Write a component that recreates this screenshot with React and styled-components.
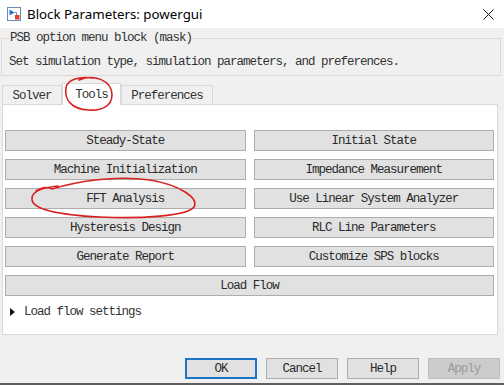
import React from "react";
import styled, { createGlobalStyle } from "styled-components";

const GlobalStyle = createGlobalStyle`
  html, body {
    margin: 0;
    padding: 0;
    background: #f0f0f0;
  }
  body {
    font-family: "Liberation Mono", "DejaVu Sans Mono", monospace;
  }
`;

const leftButtons = [
  "Steady-State",
  "Machine Initialization",
  "FFT Analysis",
  "Hysteresis Design",
  "Generate Report",
];

const rightButtons = [
  "Initial State",
  "Impedance Measurement",
  "Use Linear System Analyzer",
  "RLC Line Parameters",
  "Customize SPS blocks",
];

const tabs = [
  { label: "Solver", width: 60 },
  { label: "Tools", width: 59, active: true },
  { label: "Preferences", width: 92 },
];

const BlockIcon = () => (
  <svg width="14" height="14" viewBox="0 0 14 14">
    <rect x="0.5" y="0.5" width="13" height="13" fill="#fff" stroke="#6d8bb0" />
    <path d="M2.5 2.5 L7.5 5.5 L2.5 8.5 Z" fill="#2d6fc2" />
    <path d="M7.5 5.5 H9.5 V8" stroke="#6d8bb0" fill="none" />
    <rect x="8" y="8" width="4.5" height="4.5" fill="#e0402c" />
  </svg>
);

const CloseIcon = () => (
  <svg width="11" height="11" viewBox="0 0 11 11">
    <path d="M0.5 0.5 L10.5 10.5 M10.5 0.5 L0.5 10.5" stroke="#111" strokeWidth="1" />
  </svg>
);

const App = () => {
  return (
    <>
      <GlobalStyle />
      <Window>
        <TitleBar>
          <BlockIcon />
          <Title>Block Parameters: powergui</Title>
          <CloseIcon />
        </TitleBar>

        <GroupBox>
          <Legend>PSB option menu block (mask)</Legend>
          <Description>
            Set simulation type, simulation parameters, and preferences.
          </Description>
        </GroupBox>

        <TabRow>
          {tabs.map((t) => (
            <Tab key={t.label} $w={t.width} $active={t.active}>
              {t.label}
            </Tab>
          ))}
        </TabRow>

        <Panel>
          <ButtonGrid>
            {leftButtons.map((label, i) => (
              <React.Fragment key={label}>
                <ToolButton>{label}</ToolButton>
                <ToolButton>{rightButtons[i]}</ToolButton>
              </React.Fragment>
            ))}
            <ToolButton $wide>Load Flow</ToolButton>
          </ButtonGrid>
          <Expander>
            <Arrow />
            <span>Load flow settings</span>
          </Expander>
        </Panel>

        <Footer>
          <DialogButton $default>OK</DialogButton>
          <DialogButton>Cancel</DialogButton>
          <DialogButton>Help</DialogButton>
          <DialogButton $disabled>Apply</DialogButton>
        </Footer>

        {/* red hand-drawn annotation marks over the dialog */}
        <Marks width="504" height="385" viewBox="0 0 504 385">
          <path
            d="M79 80 C94 74 112 80 112 95 C112 107 100 111 88 110 C72 109 64 100 66 88 C67 80 78 76 93 78"
            fill="none"
            stroke="#d92020"
            strokeWidth="1.6"
            strokeLinecap="round"
          />
          <path
            d="M36 191 C42 187 48 187 52 189 C75 182 112 175 150 180 C180 185 199 198 194 207 C188 216 140 219 100 217 C60 215 34 210 32 200 C31 193 38 188 58 186"
            fill="none"
            stroke="#d92020"
            strokeWidth="1.6"
            strokeLinecap="round"
          />
        </Marks>
      </Window>
    </>
  );
};

export default App;

const Window = styled.div`
  position: relative;
  width: 504px;
  height: 385px;
  box-sizing: border-box;
  border-bottom: 2px solid #5e5e5e;
  background: #f0f0f0;
  display: flex;
  flex-direction: column;
  overflow: hidden;
  color: #1e1e1e;
  font-size: 12.5px;
  letter-spacing: -1px;
`;

const TitleBar = styled.div`
  height: 28px;
  flex-shrink: 0;
  background: #fff;
  display: flex;
  align-items: center;
  gap: 6px;
  padding: 0 10px 0 7px;
`;

const Title = styled.span`
  flex: 1;
  font-family: "Noto Sans", "Liberation Sans", sans-serif;
  font-size: 13.3px;
  letter-spacing: 0;
  color: #000;
`;

const GroupBox = styled.fieldset`
  margin: 3px 3px 0 1px;
  padding: 8px 7px 5px;
  border: 1px solid #dadada;
  min-inline-size: 0;
`;

const Legend = styled.legend`
  padding: 0 1px;
  line-height: 14px;
  color: #333;
`;

const Description = styled.div`
  line-height: 16px;
  padding-top: 1px;
  color: #333;
  white-space: nowrap;
`;

const TabRow = styled.div`
  display: flex;
  align-items: flex-end;
  height: 21px;
  margin: 7px 0 0 2px;
`;

const Tab = styled.div`
  position: relative;
  z-index: ${(p) => (p.$active ? 1 : 0)};
  width: ${(p) => p.$w}px;
  height: ${(p) => (p.$active ? 22 : 19)}px;
  margin-bottom: ${(p) => (p.$active ? -1 : 0)}px;
  box-sizing: border-box;
  border: 1px solid #d9d9d9;
  border-bottom: none;
  background: ${(p) => (p.$active ? "#fff" : "#f0f0f0")};
  display: flex;
  align-items: center;
  justify-content: center;
  padding-top: ${(p) => (p.$active ? 0 : 2)}px;
  color: #333;
`;

const Panel = styled.div`
  height: 231px;
  flex-shrink: 0;
  box-sizing: border-box;
  margin: 0 6px 0 2px;
  padding: 25px 3px 0 2px;
  background: #fff;
  border: 1px solid #d9d9d9;
`;

const ButtonGrid = styled.div`
  display: grid;
  grid-template-columns: 1fr 1fr;
  grid-auto-rows: 21px;
  gap: 8px;
`;

const ToolButton = styled.div`
  grid-column: ${(p) => (p.$wide ? "1 / -1" : "auto")};
  box-sizing: border-box;
  border: 1px solid #adadad;
  background: #e1e1e1;
  display: flex;
  align-items: center;
  justify-content: center;
  color: #2a2a2a;
  white-space: nowrap;
`;

const Expander = styled.div`
  display: flex;
  align-items: center;
  gap: 9px;
  margin-top: 8px;
  padding-left: 5px;
  line-height: 16px;
  color: #333;
`;

const Arrow = styled.span`
  width: 0;
  height: 0;
  border-top: 4px solid transparent;
  border-bottom: 4px solid transparent;
  border-left: 5px solid #111;
`;

const Footer = styled.div`
  display: flex;
  justify-content: flex-end;
  gap: 9px;
  padding: 23px 4px 0 0;
`;

const DialogButton = styled.div`
  width: 72px;
  height: 21px;
  box-sizing: border-box;
  display: flex;
  align-items: center;
  justify-content: center;
  border: ${(p) =>
    p.$default ? "2px solid #1c74c7" : p.$disabled ? "1px solid #bfbfbf" : "1px solid #adadad"};
  background: ${(p) => (p.$disabled ? "#cccccc" : "#e1e1e1")};
  color: ${(p) => (p.$disabled ? "#9a9a9a" : "#2a2a2a")};
`;

const Marks = styled.svg`
  position: absolute;
  top: 0;
  left: 0;
  z-index: 2;
  pointer-events: none;
`;
